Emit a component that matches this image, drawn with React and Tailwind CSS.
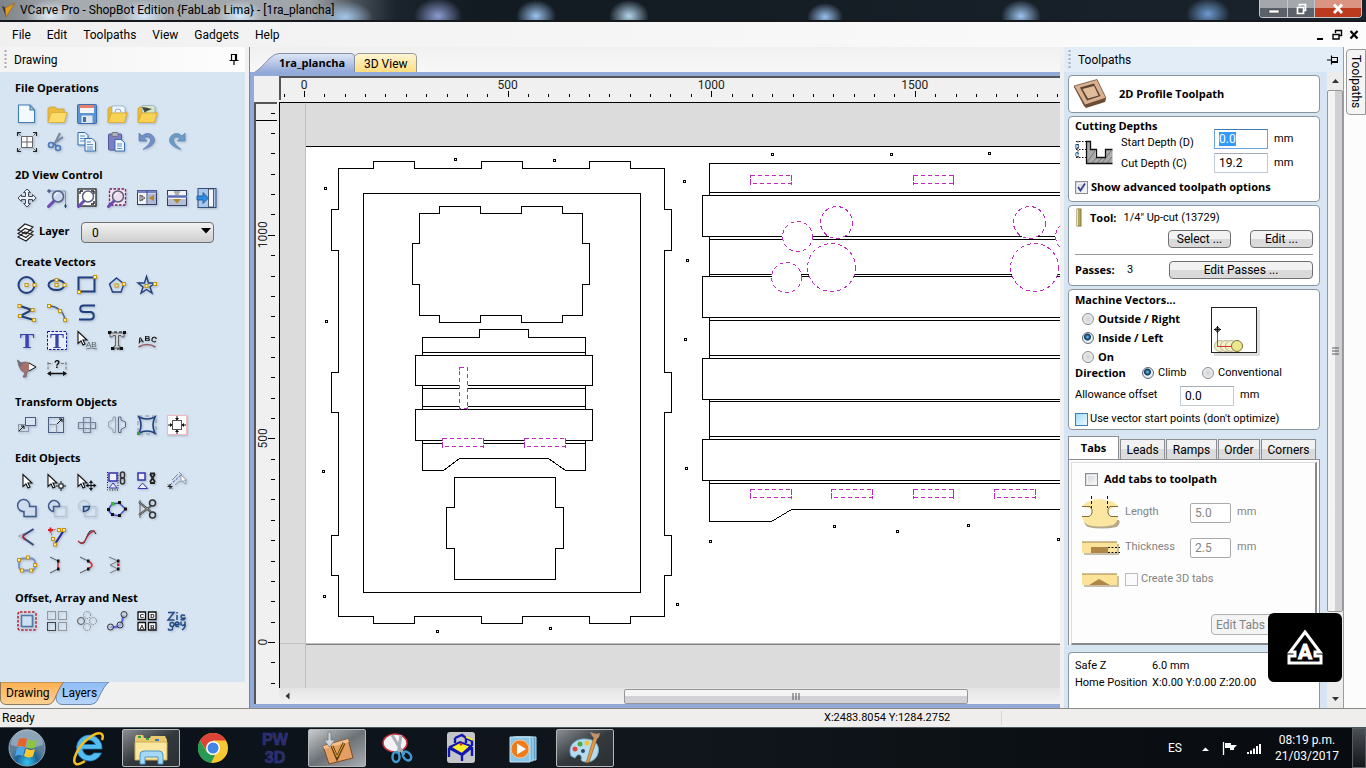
import React, { useState } from 'react';
import clsx from 'clsx';

const NAVY = '#1f3f7f';

const bold = "font-['Open_Sans','Noto_Sans',sans-serif] text-[11px] font-bold";

// small yellow node handle
const Node = ({ x, y }) => <rect x={x - 1.5} y={y - 1.5} width="3" height="3" fill="#fff3b0" stroke="#c8920a" />;

const Cursor = ({ x = 0, y = 0 }) => (
  <path transform={`translate(${x} ${y})`} d="M1 0.5V12.5L4 9.8L6 14L8 13L6 9H10Z" fill="#fff" stroke="#111" strokeWidth="1.1" />
);

const Folder = () => (
  <>
    <path d="M1 18V4.5L3 3H8L10 5H17V9" fill="#e9bd3f" stroke="#d2a12c" strokeWidth="0.8" />
    <path d="M1 18.5L4.5 8.5H20L17.5 18.5Z" fill="#fbdb6a" stroke="#dba92e" strokeWidth="0.8" />
  </>
);

const Magnifier = ({ bg }) => (
  <>
    <path d="M7 13L1.5 18.5" stroke="#6a49b8" strokeWidth="3" strokeLinecap="round" />
    <circle cx="11" cy="8.5" r="5.5" fill={bg || '#c9d8ee'} stroke="#59617c" strokeWidth="1.5" />
    <path d="M8 8A3 3 0 0 1 11 5" stroke="#fff" strokeWidth="1.2" fill="none" />
  </>
);

const icons = {
  new: <path d="M1.5 1H13L17.5 6V18.5H1.5ZM13 1V6H17.5" fill="#f3f9ff" stroke="#3f7fb5" strokeWidth="1.1" />,
  open: <Folder />,
  save: (
    <>
      <rect x="0.5" y="0.5" width="19" height="19" rx="1" fill="#5e93d2" stroke="#3b6cab" />
      <rect x="3" y="1" width="14" height="8" fill="#f4f5f8" />
      <rect x="3" y="1" width="14" height="3" fill="#e88070" />
      <rect x="4.5" y="11.5" width="11" height="7.5" fill="#e1e7f0" />
      <rect x="6" y="13" width="3" height="5" fill="#426fae" />
    </>
  ),
  import: (
    <>
      <Folder />
      <path d="M5 9V2H16L18 4V9Z" fill="#f2f7fc" stroke="#8ba9c6" strokeWidth="0.7" />
      <path d="M8 8A3 3 0 0 1 14 8" fill="none" stroke="#8ba9c6" />
      <path d="M1 18.5L4.5 9H20L17.5 18.5Z" fill="#f8d255" stroke="#dba92e" strokeWidth="0.8" />
    </>
  ),
  importImage: (
    <>
      <Folder />
      <path d="M5 9V1.5H16L18 3V9Z" fill="#d5e8c0" stroke="#8ba9c6" strokeWidth="0.7" />
      <path d="M5 3L9 3.5L15 5L9 7.5L8 9Z" fill="#444" />
      <path d="M1 18.5L4.5 9H20L17.5 18.5Z" fill="#f8d255" stroke="#dba92e" strokeWidth="0.8" />
    </>
  ),
  jobSetup: (
    <>
      <path d="M4.5 4.5H15.5V15.5H4.5ZM10 4V16M4 10H16" fill="#fff" stroke="#666" />
      <path d="M0.5 4V0.5H4M16 0.5H19.500V4M19.500 16V19.500H16M4 19.500H0.500V16" fill="none" stroke="#222" strokeWidth="1.1" />
      <path d="M1 1L3.500 3.500M19 1L16.500 3.500M19 19L16.500 16.500M1 19L3.500 16.500" stroke="#444" strokeWidth="0.8" />
    </>
  ),
  cut: (
    <>
      <path d="M13 1L7 13M16 5L6 12" stroke="#78889c" strokeWidth="2" />
      <circle cx="4" cy="13" r="2.5" fill="none" stroke="#4d79b5" strokeWidth="1.6" />
      <circle cx="11" cy="16" r="2.5" fill="none" stroke="#4d79b5" strokeWidth="1.6" />
      <path d="M7 12L10 14" stroke="#4d79b5" strokeWidth="1.6" />
    </>
  ),
  copy: (
    <>
      <path d="M1 0.5H8L11 3.5V13H1Z" fill="#eef5fd" stroke="#2f6cb0" />
      <path d="M3 4H8M3 6.500H9M3 9H9" stroke="#5b90c8" />
      <path d="M8 6.500H15L18.500 10V19H8Z" fill="#eef5fd" stroke="#2f6cb0" />
      <path d="M10 10H14M10 12.500H16M10 15H16M10 17H16" stroke="#5b90c8" />
    </>
  ),
  paste: (
    <>
      <rect x="1.500" y="2" width="13" height="16" rx="1" fill="#7e7fc3" stroke="#5556a0" />
      <rect x="5" y="0.500" width="6" height="4" rx="1" fill="#b0b3ba" stroke="#72757d" />
      <path d="M8 7.500H14L17.500 10.500V19H8Z" fill="#f3f8ff" stroke="#2f6cb0" />
      <path d="M10 12H15M10 14H15M10 16.500H15" stroke="#5b90c8" />
    </>
  ),
  undo: <path d="M2 1V9H10L7 6.500C11 3 15 6 13 10C12 12.500 10 14 6 17.500C14 15 19 11 17 6C15 1 9 0 5 4Z" fill="#7191c3" stroke="#5878ae" strokeWidth="0.7" />,
  redo: <path d="M18 1V9H10L13 6.500C9 3 5 6 7 10C8 12.500 10 14 14 17.500C6 15 1 11 3 6C5 1 11 0 15 4Z" fill="#6c9cc6" stroke="#5a88b3" strokeWidth="0.7" />,
  pan: <path d="M10 1L13.500 4.500H11.500V8.500H15.500V6.500L19 10L15.500 13.500V11.500H11.500V15.500H13.500L10 19L6.500 15.500H8.500V11.500H4.500V13.500L1 10L4.500 6.500V8.500H8.500V4.500H6.500Z" fill="#eef2f8" stroke="#444c5c" />,
  zoomBox: (
    <>
      <path d="M2 3H18.500V18" fill="none" stroke="#6a85b5" strokeWidth="0.8" />
      <path d="M0 3H4M2 1V5M17 18H20M18.500 16V20" stroke="#28406e" />
      <Magnifier />
    </>
  ),
  zoomAll: (
    <>
      <rect x="1" y="1" width="18" height="17" fill="#fff" stroke="#222" strokeWidth="1.300" />
      <path d="M3 3H6M3 3V6M17 3H14M17 3V6M17 16H14M17 16V13" stroke="#222" strokeWidth="1.400" />
      <Magnifier bg="#fff" />
    </>
  ),
  zoomSelected: (
    <>
      <rect x="2.500" y="1" width="16" height="16" fill="#f6e3ee" stroke="#7b1d68" strokeWidth="1.300" strokeDasharray="2.500 1.500" />
      <Magnifier bg="#eddcec" />
    </>
  ),
  splitV: (
    <>
      <rect x="0.500" y="2.500" width="19" height="14" fill="#f1f3f7" stroke="#333d66" />
      <rect x="0.500" y="2.500" width="19" height="2.500" fill="#7584c8" />
      <path d="M10 3V17" stroke="#333d66" />
      <path d="M3 7L8 10L3 13ZM5 7V13" fill="none" stroke="#555" />
      <rect x="11" y="5.500" width="8" height="10.500" fill="#aeb8d2" />
      <path d="M17 7V13L11.500 10Z" fill="#b28a2c" />
    </>
  ),
  splitH: (
    <>
      <rect x="0.500" y="2.500" width="19" height="15" fill="#f1f3f7" stroke="#333d66" />
      <path d="M0 8.500H20" stroke="#5c6cb6" strokeWidth="2.500" />
      <path d="M7 4H13M8 6H12" stroke="#666" />
      <rect x="1" y="11" width="18" height="6" fill="#b6bed4" />
      <path d="M6 11H14L10 15.500Z" fill="#b28a2c" />
    </>
  ),
  dockRight: (
    <>
      <rect x="1" y="0.500" width="18" height="19" fill="#a9c7e8" stroke="#33507e" />
      <rect x="11.500" y="1" width="5" height="18" fill="#f2f6fb" stroke="#345" strokeWidth="0.800" />
      <path d="M0 8H6V4.500L11.500 10L6 15.500V12H0Z" fill="#2f8be0" stroke="#15569c" strokeWidth="0.800" />
    </>
  ),
  circle: (
    <>
      <circle cx="9.500" cy="10" r="8" fill="none" stroke={NAVY} strokeWidth="2" />
      <Node x={9.500} y={10} /><Node x={17.500} y={10} />
    </>
  ),
  ellipse: (
    <>
      <ellipse cx="9.500" cy="10" rx="8" ry="5" fill="none" stroke={NAVY} strokeWidth="2" />
      <Node x={9.500} y={10} /><Node x={9.500} y={5} /><Node x={17.500} y={10} />
    </>
  ),
  rectangle: (
    <>
      <rect x="1.500" y="2.500" width="16" height="14" fill="none" stroke={NAVY} strokeWidth="2" />
      <Node x={18} y={2} /><Node x={2} y={17} />
    </>
  ),
  polygon: (
    <>
      <path d="M9.500 3L17 9L14 17H5.500L2.500 9Z" fill="none" stroke={NAVY} strokeWidth="1.400" />
      <Node x={9.500} y={10.500} /><Node x={17} y={9} />
    </>
  ),
  star: (
    <>
      <path d="M9.500 1.500L11.500 8H18L13 12L15 18L9.500 14.500L4 18L6 12L1 8H7.500Z" fill="none" stroke={NAVY} strokeWidth="1.400" />
      <Node x={9.500} y={11} /><Node x={18} y={9} />
    </>
  ),
  polyline: (
    <>
      <path d="M3 3L15 7L3 13L17 17" fill="none" stroke={NAVY} strokeWidth="2" />
      <Node x={2.500} y={3} /><Node x={15.500} y={7} /><Node x={3} y={13} /><Node x={17} y={17} />
    </>
  ),
  arc: (
    <>
      <path d="M2 3C10 3 17 9 18 17" fill="none" stroke="#4b5f7f" strokeWidth="1.400" />
      <Node x={2} y={3} /><Node x={13} y={8} /><Node x={18} y={17} />
    </>
  ),
  curve: <path d="M18 2.500H7C2 2.500 2 9 7 9H13C18 9 18 16.500 13 16.500H2" fill="none" stroke={NAVY} strokeWidth="2" />,
  text: <text x="10" y="17" textAnchor="middle" fill="#3a42ad" fontFamily="Liberation Serif, serif" fontWeight="bold" fontSize="22">T</text>,
  textBox: (
    <>
      <rect x="0.500" y="0.500" width="19" height="18" fill="#e9effa" stroke="#15159a" strokeDasharray="2.500 1.500" />
      <text x="10" y="16.500" textAnchor="middle" fill="#3a42ad" fontFamily="Liberation Serif, serif" fontWeight="bold" fontSize="21">T</text>
    </>
  ),
  textSelect: (
    <>
      <Cursor />
      <text x="9" y="16" fill="#566" fontFamily="Liberation Sans, sans-serif" fontSize="8">AB</text>
      <path d="M9 18Q14 16 20 18" fill="none" stroke="#778" />
    </>
  ),
  textTransform: (
    <>
      <path d="M3 2H17V6H15L14 4.500H11.500V15H13V17H7V15H8.500V4.500H6L5 6H3Z" fill="#cfd3d8" stroke="#555" strokeWidth="0.900" />
      <path d="M2 1H18M5 18H15" stroke="#111" strokeWidth="1" strokeDasharray="3 2" />
      <path d="M1 0H4V3H1ZM16 0H19V3H16ZM4 16H7V19H4ZM13 16H16V19H13Z" fill="#111" />
    </>
  ),
  textCurve: (
    <>
      <g fill="#111" fontFamily="Liberation Sans, sans-serif" fontWeight="bold" fontSize="8">
        <text x="1" y="12" transform="rotate(-14 3 10)">A</text>
        <text x="7.500" y="9.500">B</text>
        <text x="14" y="11" transform="rotate(14 16 9)">C</text>
      </g>
      <path d="M1.500 16Q10 11 18.500 16" fill="none" stroke="#9a5a62" strokeWidth="1.500" />
    </>
  ),
  trace: (
    <>
      <path d="M0.500 1L4 4L8 3L12 4L14 6L13 11L10 13L9 18H6L8 14L4 11L2 7Z" fill="#a9706c" stroke="#6d6468" strokeWidth="0.800" />
      <path d="M0.500 1L4 4L7 3L4 8L2 6Z" fill="#6d7078" />
      <path d="M12 4L19 8L12 12" fill="#f4f6fa" stroke="#111" />
    </>
  ),
  dimension: (
    <>
      <path d="M1 3V11M19 3V11M1 4.500H6M14 4.500H19" stroke="#777" strokeDasharray="3 1.500" />
      <text x="7" y="9" fontFamily="Liberation Sans, sans-serif" fontWeight="bold" fontSize="10">?</text>
      <path d="M1 14.500H19" stroke="#111" strokeWidth="1.500" />
      <path d="M0 14.500L4 12V17ZM20 14.500L16 12V17Z" fill="#111" />
    </>
  ),
  move: (
    <>
      <rect x="1.500" y="9.500" width="10" height="7" fill="none" stroke="#8b96ab" />
      <rect x="8.500" y="2.500" width="10" height="8" fill="#d9e4f2" stroke="#4b5d80" />
      <path d="M2 16L7 11M7 11H4M7 11V14" stroke="#111" fill="none" />
    </>
  ),
  scale: (
    <>
      <rect x="1.500" y="2.500" width="15" height="15" fill="none" stroke="#4b5d80" />
      <path d="M1.500 9.500H9.500V17.500" fill="none" stroke="#8b96ab" />
      <path d="M10 9L15 4M15 4H12M15 4V7" stroke="#111" fill="none" />
    </>
  ),
  align: <path d="M6.500 2.500H13.500V17.500H6.500ZM1.500 7.500H18.500V13.500H1.500Z" fill="none" stroke="#75839b" strokeWidth="1.200" />,
  mirror: (
    <>
      <path d="M8.500 2V17.500H6V14.500L1.500 12V7L6 5V2Z" fill="none" stroke="#9aa3b3" />
      <path d="M11.500 2V17.500H14V14.500L18.500 12V7L14 5V2Z" fill="none" stroke="#5b6880" />
    </>
  ),
  distort: (
    <>
      <rect x="1" y="1" width="18" height="18" fill="none" stroke="#8d98aa" strokeDasharray="4 3" />
      <path d="M2 2Q10 6 18 2Q14 10 18 18Q10 14 2 18Q6 10 2 2Z" fill="none" stroke={NAVY} strokeWidth="1.600" />
      <rect x="0" y="17" width="3" height="3" fill="#3b9a3b" />
    </>
  ),
  center: (
    <>
      <rect x="0.500" y="0.500" width="19" height="19" fill="#fff" stroke="#f0b9bb" />
      <rect x="5.500" y="5.500" width="9" height="9" fill="none" stroke="#555" />
      <path d="M10 1V5M10 15V19M1 10H5M15 10H19" stroke="#111" />
      <path d="M8 3H12L10 5.500ZM8 17H12L10 14.500ZM3 8V12L5.500 10ZM17 8V12L14.500 10Z" fill="#111" />
    </>
  ),
  select: <Cursor x={5} y={3} />,
  nodeEdit: (
    <>
      <Cursor y={3} />
      <path d="M14 10V20M9 15H19" stroke="#111" />
      <rect x="12" y="13" width="4" height="4" fill="#fff" stroke="#111" />
    </>
  ),
  transformSelect: (
    <>
      <Cursor y={3} />
      <path d="M14 9L16 12H12ZM14 20L16 17H12ZM8.500 14.500L11.500 12.500V16.500ZM19.500 14.500L16.500 12.500V16.500Z" fill="#111" />
      <path d="M14 11V18M11 14.500H17" stroke="#111" />
    </>
  ),
  group: (
    <>
      <path d="M0.500 1V19H11V1" fill="none" stroke="#111" strokeDasharray="1 1.500" />
      <rect x="2" y="2" width="8" height="8" fill="#eef" stroke="#3434b0" strokeWidth="1.500" />
      <path d="M6 12L10 17H2Z" fill="#eef" stroke="#3434b0" />
      <rect x="13.500" y="1" width="4" height="6" rx="2" fill="none" stroke="#333" strokeWidth="1.500" />
      <rect x="13.500" y="7" width="4" height="6" rx="2" fill="none" stroke="#333" strokeWidth="1.500" />
    </>
  ),
  ungroup: (
    <>
      <rect x="1" y="2" width="7" height="7" fill="#eef" stroke="#3434b0" strokeWidth="1.500" />
      <path d="M5.500 12L10.500 17.500H1Z" fill="#eef" stroke="#3434b0" />
      <path d="M13 3L18 11M18 3L13 11M13 2.500H18M13 12H18" stroke="#222" strokeWidth="1.800" />
    </>
  ),
  measure: (
    <>
      <path d="M3 14L15 3" stroke="#4a50c8" strokeDasharray="2.500 1.500" />
      <path d="M3 13V18M0.500 15.500H5.500M1 13.500L5 17.500" stroke="#222" />
      <path d="M5 9L11 3M12 1L15 4M8 14L13 10" fill="none" stroke="#8a93a3" />
      <path d="M14 4V11L16 9.500L18 13L19 12L17.500 9H19.500Z" fill="#fff" stroke="#8a93a3" strokeWidth="0.800" />
    </>
  ),
  weld: <path d="M7 12.500A6 6 0 1 1 12.500 7.500H19V17.500H7Z" fill="#cfdcee" stroke="#3e5b8c" strokeWidth="1.500" />,
  subtract: (
    <>
      <rect x="7.500" y="7.500" width="11.500" height="10" fill="none" stroke="#b5c2d6" />
      <path d="M6.500 12.500A5.500 5.500 0 1 1 12.500 7.500H6.500Z" fill="#cfdcee" stroke="#3e5b8c" strokeWidth="1.500" />
    </>
  ),
  intersect: (
    <>
      <circle cx="7" cy="7" r="5.500" fill="none" stroke="#b5c2d6" />
      <rect x="7.500" y="7.500" width="11.500" height="10" fill="none" stroke="#b5c2d6" />
      <path d="M6.500 7.500H12.500Q12 12 6.500 12.500Z" fill="#a9bbd6" stroke="#27467c" strokeWidth="1.500" />
    </>
  ),
  join: (
    <>
      <path d="M5 5L12 4L18.500 10L12 17L5 15.500L1 11Z" fill="none" stroke="#4a50c8" strokeWidth="1.500" />
      <path d="M11 2H14V5H11ZM17 8.500H20V11.500H17ZM11 15H14V18H11ZM4 14H7V17H4ZM0 9H3V12H0Z" fill="#111" />
      <rect x="4" y="3" width="3.500" height="3.500" fill="#2fbf2f" />
    </>
  ),
  scissors: (
    <>
      <path d="M3 1V19" stroke="#666" />
      <path d="M2 3L14 13M2 16L14 7" stroke="#333" strokeWidth="2" />
      <path d="M2 3L14 13M2 16L14 7" stroke="#ddd" strokeWidth="0.600" />
      <circle cx="15.500" cy="4" r="3" fill="none" stroke="#333" strokeWidth="1.500" />
      <circle cx="15.500" cy="16" r="3" fill="none" stroke="#333" strokeWidth="1.500" />
    </>
  ),
  fillet: (
    <>
      <path d="M16 3L1.500 9L16 17" fill="none" stroke="#9ba4b5" />
      <path d="M16.500 2L7 8Q5 10 8 12L16.500 18" fill="none" stroke="#2d4373" strokeWidth="1.600" />
      <path d="M7.500 7Q4.500 10 8 12.500" fill="none" stroke="#c01f2f" strokeWidth="1.600" />
    </>
  ),
  extend: (
    <>
      <path d="M3 3L14 2M3 3L6 12" stroke="#d46" strokeDasharray="2 1.500" />
      <path d="M8 17L17 3" stroke="#28289a" strokeWidth="2.200" />
      <path d="M1 3H6M3.500 0.500V5.500" stroke="#d22" strokeWidth="1.800" />
      <Node x={17} y={3} /><Node x={12} y={3} /><Node x={6} y={12} /><Node x={8} y={17.500} />
    </>
  ),
  smooth: (
    <>
      <path d="M1 14L3 16L7 16L11 7L13 4L17 4L19 7" fill="none" stroke="#111" />
      <path d="M1 14Q6 19 9 12T18 4" fill="none" stroke="#b3303c" strokeWidth="1.300" />
    </>
  ),
  fitCurve: (
    <>
      <rect x="2" y="3.500" width="16" height="12" rx="4" fill="none" stroke="#7791bd" strokeWidth="1.800" />
      <Node x={2} y={5} /><Node x={11} y={2.500} /><Node x={18} y={10} /><Node x={14} y={15.500} /><Node x={5} y={15.500} />
    </>
  ),
  closeLine: (
    <>
      <path d="M3 2L11 6M11 14L3 18" stroke="#555" />
      <path d="M11 6V14" stroke="#d33" strokeWidth="1.500" />
      <path d="M10 4.500H12.500V7.500H10ZM10 12.500H12.500V15.500H10Z" fill="#111" />
    </>
  ),
  closeCurve: (
    <>
      <path d="M3 2L11 6M11 14L3 18" stroke="#555" />
      <path d="M11 6Q19 10 11 14" fill="none" stroke="#d33" strokeWidth="1.500" />
      <path d="M10 4.500H12.500V7.500H10ZM10 12.500H12.500V15.500H10Z" fill="#111" />
    </>
  ),
  closeMove: (
    <>
      <path d="M2 2L11 6L3 10L11 14L3 18" fill="none" stroke="#777" />
      <path d="M10 4.500H12.500V7.500H10ZM10 12.500H12.500V15.500H10Z" fill="#111" />
      <rect x="10" y="8.500" width="2.500" height="2.500" fill="#d22" />
    </>
  ),
  offset: (
    <>
      <rect x="1" y="1" width="18" height="18" rx="2" fill="none" stroke="#b81f2b" strokeWidth="1.500" strokeDasharray="2.500 1.500" />
      <rect x="4.500" y="4.500" width="11" height="11" fill="#cfe0f3" stroke="#5577a8" strokeWidth="1.600" />
    </>
  ),
  blockArray: (
    <>
      <path d="M0.500 0.500H8.500V8.500H0.500ZM11.500 0.500H19.500V8.500H11.500ZM11.500 11.500H19.500V19.500H11.500Z" fill="none" stroke="#555" strokeDasharray="1 1" />
      <rect x="0.500" y="11.500" width="8" height="8" fill="none" stroke="#444" />
    </>
  ),
  circleArray: (
    <>
      <circle cx="4" cy="10" r="3.500" fill="none" stroke="#555" />
      <circle cx="10" cy="4" r="3.500" fill="none" stroke="#777" strokeDasharray="1.200 1" />
      <circle cx="16" cy="10" r="3.500" fill="none" stroke="#777" strokeDasharray="1.200 1" />
      <circle cx="10" cy="16" r="3.500" fill="none" stroke="#777" strokeDasharray="1.200 1" />
    </>
  ),
  pathArray: (
    <>
      <path d="M3 16Q16 18 16 4" fill="none" stroke="#5a60d8" strokeWidth="2" />
      <g fill="#cdd6ea" fillOpacity="0.600" stroke="#333"><circle cx="3.500" cy="16" r="3" /><circle cx="13" cy="14" r="3" /><circle cx="17" cy="3.500" r="3" /></g>
    </>
  ),
  nest: (
    <>
      <path d="M1 1H8.500V8.500H1ZM11.500 1H19V8.500H11.500ZM1 11.500H8.500V19H1ZM11.500 11.500H19V19H11.500Z" fill="#fff" stroke="#111" strokeWidth="1.300" />
      <g fontFamily="Liberation Sans, sans-serif" fontWeight="bold" fontSize="6" textAnchor="middle">
        <text x="4.800" y="7">C</text><text x="15.300" y="7">D</text><text x="4.800" y="17.500">A</text><text x="15.300" y="17.500">B</text>
      </g>
    </>
  ),
  plate: (
    <g fill="none" stroke="#234a86" strokeWidth="1.500">
      <path d="M1 1.500H7L1 9H7.500M10 4V9M10 1V2.500M18 4.500Q14 3 14 5.500T18 7Q18 9.500 13.500 8.500" />
      <path d="M5 11.500A2 2 0 1 0 5 15.500A2 2 0 1 0 5 11.500M5 15.500Q7 19.500 3 19Q1 19 1.500 17.500M8.500 13.500H12Q12 11 10 11Q8 11 8.500 14Q9 16 12 15.500M14 10.500V13.500Q16 15.500 18 13V10.500M18 13Q19 16 15 19" />
    </g>
  ),
};

const toolSections = [
  { title: 'File Operations', rows: [['new', 'open', 'save', 'import', 'importImage'], ['jobSetup', 'cut', 'copy', 'paste', 'undo', 'redo']] },
  { title: '2D View Control', rows: [['pan', 'zoomBox', 'zoomAll', 'zoomSelected', 'splitV', 'splitH', 'dockRight']], layer: true },
  { title: 'Create Vectors', rows: [['circle', 'ellipse', 'rectangle', 'polygon', 'star'], ['polyline', 'arc', 'curve'], ['text', 'textBox', 'textSelect', 'textTransform', 'textCurve'], ['trace', 'dimension']] },
  { title: 'Transform Objects', rows: [['move', 'scale', 'align', 'mirror', 'distort', 'center']] },
  { title: 'Edit Objects', rows: [['select', 'nodeEdit', 'transformSelect', 'group', 'ungroup', 'measure'], ['weld', 'subtract', 'intersect', 'join', 'scissors'], ['fillet', 'extend', 'smooth'], ['fitCurve', 'closeLine', 'closeCurve', 'closeMove']] },
  { title: 'Offset, Array and Nest', rows: [['offset', 'blockArray', 'circleArray', 'pathArray', 'nest', 'plate']] },
];

const PushPin = ({ className }) => (
  <svg width="10" height="12" viewBox="0 0 10 12" className={className}>
    <path d="M2.500 0.500H7.500V6.500H2.500ZM6.500 0.500V6.500M0.500 6.500H9.500M5 7V11" fill="none" stroke="#000" strokeWidth="1.200" />
  </svg>
);

const Grip = () => (
  <svg width="4" height="20" viewBox="0 0 4 20">
    <path d="M1.500 0V20" stroke="#a9aeb4" strokeWidth="2" strokeDasharray="2 2" />
  </svg>
);

const TitleBar = () => (
  <header className="h-[22px] shrink-0 flex items-start justify-between border-b-2 border-[#15181c] bg-[radial-gradient(ellipse_24px_18px_at_438px_16px,#8c9bd0,transparent),radial-gradient(ellipse_20px_16px_at_536px_16px,#9cc4ee,transparent),radial-gradient(ellipse_20px_16px_at_629px_16px,#b4d4ea,transparent),radial-gradient(ellipse_18px_14px_at_825px_17px,#98c0ea,transparent),radial-gradient(ellipse_20px_16px_at_1021px_16px,#9cc4ee,transparent),radial-gradient(ellipse_22px_16px_at_1208px_14px,#6f9bd0,transparent),radial-gradient(ellipse_24px_16px_at_50px_16px,#dfeaf4,transparent),radial-gradient(ellipse_24px_16px_at_144px_16px,#d4e6f8,transparent),radial-gradient(ellipse_24px_16px_at_240px_16px,#d4e6f8,transparent),radial-gradient(ellipse_28px_16px_at_345px_17px,#a4c6ea,transparent),linear-gradient(90deg,#7c8389,#a7acb1_60px,#a0a5aa_310px,#4a525a_355px,#1b232c_395px,#121a22_480px,#1a222b)]">
    <div className="flex items-center h-5 pl-0.5 gap-1">
      <svg width="14" height="16" viewBox="0 0 14 16">
        <path d="M0 4L4 6L4 15Z" fill="#333" />
        <path d="M3 6L13 1L4 15Z" fill="#e39a22" stroke="#9b6311" strokeWidth="0.700" />
      </svg>
      <h1 className="text-xs leading-5 text-black">VCarve Pro - ShopBot Edition {'{FabLab Lima}'} - [1ra_plancha]</h1>
    </div>
    <div className="flex mr-1 h-[18px] rounded-b border border-t-0 border-[#c4c8cc] overflow-hidden">
      <button aria-label="Minimize" className="w-7 flex items-center justify-center border-r border-[#c4c8cc] bg-linear-to-b from-[#a4a8ad] from-50% to-[#5b6168] to-50%">
        <svg width="12" height="12"><rect x="1" y="7" width="10" height="3" fill="#fff" stroke="#444" strokeWidth="0.600" /></svg>
      </button>
      <button aria-label="Restore" className="w-[27px] flex items-center justify-center border-r border-[#c4c8cc] bg-linear-to-b from-[#a4a8ad] from-50% to-[#5b6168] to-50%">
        <svg width="12" height="12"><path d="M4.500 3V1.500H10.500V7.500H9M2.500 4.500H8.500V10.500H2.500Z" fill="none" stroke="#fff" strokeWidth="1.700" /></svg>
      </button>
      <button aria-label="Close" className="w-[46px] flex items-center justify-center bg-linear-to-b from-[#dc9482] from-50% to-[#bc3a1e] to-50%">
        <svg width="12" height="12"><path d="M2 1.500L10 10M10 1.500L2 10" stroke="#fff" strokeWidth="2.800" /></svg>
      </button>
    </div>
  </header>
);

const MenuBar = () => (
  <nav className="h-[25px] shrink-0 flex items-center justify-between bg-linear-to-r from-[#f0f0f0] to-[#fcfcfc] pl-1 pr-1.5">
    <div className="flex">
      {['File', 'Edit', 'Toolpaths', 'View', 'Gadgets', 'Help'].map((item) => (
        <button key={item} className="px-2 text-xs leading-5">{item}</button>
      ))}
    </div>
    <div className="flex gap-1.5">
      <button aria-label="Minimize document"><svg width="11" height="12"><path d="M2 10H8" stroke="#000" strokeWidth="2" /></svg></button>
      <button aria-label="Restore document"><svg width="11" height="12"><path d="M3.500 4V1.500H9.500V6.500H7M1 5.500H7V10H1Z" fill="none" stroke="#000" strokeWidth="1.400" /></svg></button>
      <button aria-label="Close document"><svg width="11" height="12"><path d="M1.500 2L8.500 9.500M8.500 2L1.500 9.500" stroke="#000" strokeWidth="2.200" /></svg></button>
    </div>
  </nav>
);

const DrawingPanel = () => (
  <aside className="w-[245px] shrink-0 flex flex-col bg-[#f0f0f0] mr-1">
    <div className="h-[25px] flex items-center gap-1.5 pl-1 pr-1.5 bg-linear-to-r from-[#f3f3f3] to-[#fdfdfd]">
      <Grip />
      <h2 className="flex-1 text-xs">Drawing</h2>
      <button aria-label="Pin drawing panel"><PushPin /></button>
    </div>
    <div className="flex-1 min-h-0 overflow-hidden flex flex-col gap-2.5 pt-[7px] bg-[#d7e4f1]">
      {toolSections.map((section) => (
        <section key={section.title} className="first:flex first:flex-col first:gap-[3px]">
          <h3 className={clsx('pl-[15px] leading-[18px]', bold)}>{section.title}</h3>
          <div>
            {section.rows.map((row) => (
              <div key={row[0]} className="flex pl-3">
                {row.map((name) => (
                  <button key={name} aria-label={name} className="w-[30px] h-7 flex items-center justify-center">
                    <svg width="20" height="20" viewBox="0 0 20 20" className="overflow-visible drop-shadow-[1px_1px_1px_rgba(80,100,130,0.35)]">{icons[name]}</svg>
                  </button>
                ))}
              </div>
            ))}
          </div>
          {section.layer && (
            <div className="flex items-center h-[31px] pt-2 pl-[17px]">
              <svg width="18" height="20" viewBox="0 0 18 20">
                <path d="M1 15L9 19L16 13L8 10ZM1 11.500L9 15.500L16 9.500L8 6.500ZM1 8L9 12L16 5L8 2Z" fill="#fff" stroke="#222" strokeWidth="1.200" />
              </svg>
              <label htmlFor="layer" className={clsx('pl-1 w-[46px]', bold)}>Layer</label>
              <div className="relative w-[133px]">
                <select id="layer" defaultValue="0" className="appearance-none w-full h-[21px] pl-2.5 text-xs rounded-sm border border-[#707070] bg-linear-to-b from-[#f2f2f2] to-[#cfcfcf]">
                  <option>0</option>
                </select>
                <svg width="10" height="6" className="absolute right-[3px] top-2 pointer-events-none"><path d="M0 0H10L5 5.500Z" /></svg>
              </div>
            </div>
          )}
        </section>
      ))}
    </div>
    <div className="relative h-[26px] flex items-start" role="tablist">
      <svg width="112" height="23" className="absolute left-0 top-0">
        <defs>
          <linearGradient id="tabOrange" x2="0" y2="1"><stop offset="0" stopColor="#fdb050" /><stop offset="1" stopColor="#fdd194" /></linearGradient>
          <linearGradient id="tabBlue" x2="0" y2="1"><stop offset="0" stopColor="#8dbcf5" /><stop offset="1" stopColor="#b6d5fb" /></linearGradient>
        </defs>
        <path d="M56 0H109Q105 2 98 17Q96 22 90 22.500H62Q56 22 56 15Z" fill="url(#tabBlue)" stroke="#6d87ad" />
        <path d="M0.500 0H64Q61 2 55 16Q53 22 48 22.500H6Q0.500 22 0.500 17Z" fill="url(#tabOrange)" stroke="#8f7a5a" />
      </svg>
      <button role="tab" aria-selected="true" className="relative pl-1.5 w-[62px] text-left text-xs leading-[22px]">Drawing</button>
      <button role="tab" aria-selected="false" className="relative text-xs leading-[22px]">Layers</button>
    </div>
  </aside>
);

const TICK = 20.36;
const rulerTicks = Array.from({ length: 40 }, (_, i) => i - 1);

const HorizontalRuler = () => (
  <svg className="block w-full h-6 bg-[#f0f0f0] border-t-2 border-l-2 border-[#555]" shapeRendering="crispEdges">
    {rulerTicks.map((i) => {
      const x = Math.round(23 + i * TICK) + 0.5;
      return <path key={i} d={`M${x} 16V19`} stroke="#000" />;
    })}
    {[0, 10, 20, 30].map((i) => (
      <React.Fragment key={i}>
        <path d={`M${Math.round(23 + i * TICK) + 0.5} 13V19`} stroke="#000" />
        <text x={23 + i * TICK} y="11" textAnchor="middle" fontSize="12" fill="#222">{i * 50}</text>
      </React.Fragment>
    ))}
  </svg>
);

const VerticalRuler = () => (
  <svg className="block w-[23px] shrink-0 h-full bg-[#f0f0f0] border-t-2 border-l-2 border-[#555]" shapeRendering="crispEdges">
    <path d="M0 16.500H21" stroke="#000" />
    {rulerTicks.slice(0, 28).map((i) => (
      <path key={i} d={`M15 ${Math.round(538 - i * TICK) + 0.5}H19`} stroke="#000" />
    ))}
    <path d="M15 579.500H19" stroke="#000" />
    {[0, 10, 20].map((i) => {
      const y = 538 - i * TICK;
      return (
        <React.Fragment key={i}>
          <path d={`M12 ${Math.round(y) + 0.5}H19`} stroke="#000" />
          <text transform={`translate(11 ${y}) rotate(-90)`} textAnchor="middle" fontSize="12" fill="#222">{i * 50}</text>
        </React.Fragment>
      );
    })}
  </svg>
);

const holes = [
  [455, 159], [554, 160], [325, 188], [326, 321], [323, 471], [324, 596], [437, 631], [550, 628], [686, 468], [677, 604], [685, 339],
  [687, 260], [684, 181], [772, 154], [891, 154], [989, 153], [834, 526], [897, 531], [968, 525], [710, 541], [1058, 539],
];

const pockets = [
  [459, 367, 8, 41], [442, 438, 41, 8], [524, 438, 41, 8],
  [750, 175, 41, 8], [913, 175, 40, 8],
  [750, 489, 41, 8], [831, 489, 41, 8], [913, 489, 40, 8], [994, 489, 41, 8],
];

const discs = [[836, 222, 16], [797, 236, 15], [786, 277, 15], [831, 267, 24], [1029, 222, 16], [1034, 267, 24], [1070, 236, 15]];

const Canvas = () => (
  <svg className="block w-full flex-1 min-h-0 bg-[#dcdcdc] border-t border-l border-black">
    <g transform="translate(-280 -103)" shapeRendering="crispEdges" fill="none" stroke="#000">
      <path d="M306 146H4000V643H306Z" fill="#fff" stroke="none" />
      <path d="M305.500 104V4000M280 643.500H4000" stroke="#c0c0c0" />
      <path d="M306 644.500H4000" stroke="#808080" />
      <path d="M306 146.500H4000" />
      <g transform="translate(0.500 0.500)">
        <path d="M338 168H373V161H414V168H481V161H522V168H589V161H630V168H664V209H671V250H664V372H671V412H664V535H671V575H664V616H630V623H589V616H522V623H481V616H414V623H373V616H338V575H331V535H338V412H331V372H338V250H331V209H338Z" />
        <path d="M363 193H640V592H363Z" />
        <path d="M419 213H439V206H480V213H521V206H562V213H582V243H589V284H582V315H562V322H521V315H480V322H439V315H419V284H412V243H419Z" />
        <path d="M422 355V337H479V329H528V337H585V355M422 352H585M415 355H592V385H415ZM422 385V409M585 385V409M422 388H585M422 406H585M415 409H592V440H415ZM422 440V470H443L459 458H548L565 470H585V440M422 443H585" />
        <path d="M454 477H555V507H563V548H555V579H454V548H446V507H454Z" />
        <path d="M4000 163H709V192H4000M709 192V195M4000 195H702V236H4000M709 236V276M709 239H4000M709 274H4000M4000 276H702V317H4000M709 317V358M709 320H4000M709 355H4000M4000 358H702V399H4000M709 399V439M709 401H4000M709 436H4000M4000 439H702V480H4000M709 480V521H771L791 509H4000M709 483H4000" />
      </g>
      <g transform="translate(0.500 0.500)" stroke="#c028c0" strokeDasharray="4 3">
        {pockets.map(([x, y, w, h]) => (
          <React.Fragment key={`${x}-${y}`}>
            <rect x={x} y={y} width={w} height={h} fill="#fff" />
            <path d={`M${x} ${y + 2}V${y - 1}M${x + w} ${y + 2}V${y - 1}M${x} ${y + h - 2}V${y + h + 1}M${x + w} ${y + h - 2}V${y + h + 1}`} strokeDasharray="none" />
          </React.Fragment>
        ))}
        {discs.map(([x, y, r]) => <circle key={x} cx={x} cy={y} r={r} fill="#fff" />)}
      </g>
      {holes.map(([x, y]) => <rect key={`${x}-${y}`} x={x - 0.500} y={y - 0.500} width="2" height="2" />)}
    </g>
  </svg>
);

const Workspace = () => (
  <main className="flex-1 min-w-0 flex flex-col border-l border-[#848484] bg-linear-to-b from-[#f0f0f0] to-[#fafafa] to-5%">
    <div className="relative h-[25px] shrink-0 flex" role="tablist">
      <svg width="180" height="20" className="absolute left-0 bottom-0">
        <defs>
          <linearGradient id="docBlue" x2="0" y2="1"><stop offset="0" stopColor="#dfe8f8" /><stop offset="1" stopColor="#93a9d8" /></linearGradient>
          <linearGradient id="docGold" x2="0" y2="1"><stop offset="0" stopColor="#fff6d8" /><stop offset="1" stopColor="#ffdd7e" /></linearGradient>
        </defs>
        <path d="M104.500 20V4L108 1.500H163Q166.500 1.500 166.500 5V20" fill="url(#docGold)" stroke="#999" />
        <path d="M5 20Q10 17 20 6Q25 1.500 29 1.500H101Q104.500 1.500 104.500 5V20" fill="url(#docBlue)" stroke="#8791a5" />
      </svg>
      <button role="tab" aria-selected="true" className={clsx('relative w-[114px] pl-[29px] pt-2 text-left', bold)}>1ra_plancha</button>
      <button role="tab" aria-selected="false" className="relative pt-2 text-xs">3D View</button>
    </div>
    <div className="flex-1 min-h-0 flex flex-col border-4 border-r-0 border-[#93a9d8] bg-[#f0f0f0]">
      <div className="h-[26px] shrink-0 pl-[25px]"><HorizontalRuler /></div>
      <div className="flex-1 min-h-0 flex gap-0.5">
        <VerticalRuler />
        <div className="flex-1 min-w-0 flex flex-col">
          <Canvas />
          <div className="h-4 shrink-0 flex items-center bg-linear-to-b from-[#e4e4e4] to-[#f3f3f3]">
            <button aria-label="Scroll left" className="w-4 flex justify-center"><svg width="5" height="8"><path d="M4.500 0.500V7.500L0.500 4Z" fill="#333" /></svg></button>
            <div className="flex-1 flex h-[15px]">
              <div className="w-[43%]" />
              <div className="w-[45%] flex items-center justify-center rounded-xs border border-[#979797] bg-linear-to-b from-[#f4f4f4] from-50% to-[#d2d2d6] to-50%">
                <svg width="8" height="7"><path d="M1 0V7M4 0V7M7 0V7" stroke="#555" /></svg>
              </div>
            </div>
          </div>
        </div>
      </div>
    </div>
  </main>
);

const Card = ({ className, children }) => (
  <section className={clsx('rounded border border-[#8c959e] bg-white', className)}>{children}</section>
);

const Num = ({ id, value, className, ...rest }) => (
  <input id={id} defaultValue={value} className={clsx('h-5 px-1 text-xs leading-4 border bg-white', className || 'w-[54px] border-[#c3cbd4] border-t-[#a5adb8]')} {...rest} />
);

const PushButton = ({ className, children, ...rest }) => (
  <button className={clsx('text-xs leading-4 rounded-sm border border-[#707070] bg-linear-to-b from-[#f2f2f2] from-50% to-[#dadada] to-50% disabled:border-[#adb2b5] disabled:from-[#f4f4f4] disabled:to-[#f4f4f4] disabled:text-[#838383]', className)} {...rest}>
    {children}
  </button>
);

const Radio = ({ name, label, strong, ...rest }) => (
  <label className={clsx('flex items-center', strong && bold)}>
    <input type="radio" name={name} className="appearance-none size-3 shrink-0 rounded-full border border-[#8e8f8f] bg-[radial-gradient(circle,#d0d3d6,#f6f6f6)] checked:border-[#5e6a74] checked:bg-[radial-gradient(circle_at_45%_40%,#6fd0f5,#14456e_2.500px,#123a5c_3px,#e8eef2_4px)]" {...rest} />
    <span className="pl-1">{label}</span>
  </label>
);

const checkBase = 'appearance-none size-[13px] shrink-0 border border-[#8e8f8f] bg-[linear-gradient(135deg,#cfd3d8,#f8f8f8)] outline-1 -outline-offset-3 outline-[#f4f4f4]';

const ProfileForm = () => {
  const [advanced, setAdvanced] = useState(true);
  const [tab, setTab] = useState('Tabs');

  return (
    <div className="flex-1 min-w-0 min-h-0 overflow-hidden flex flex-col gap-[3px] pt-[3px] pl-1 pr-[7px] text-[11px]">
      <Card className="h-[38px] shrink-0 flex items-center gap-3 pl-1">
        <svg width="34" height="30" viewBox="0 0 34 30">
          <path d="M1 8L24 1L33 20L32 23L13 29L11 27Z" fill="#6b4c34" />
          <path d="M1 7L24 0.500L33 19L12 26Z" fill="#d9b190" stroke="#5c412c" strokeWidth="0.700" />
          <path d="M7 8.500L21 4.500L27.500 17L14 21.500Z" fill="#5a4330" />
          <path d="M9.500 10L21 7L25.500 16.500L15 19.500Z" fill="#e2bb9b" />
        </svg>
        <h3 className={bold}>2D Profile Toolpath</h3>
      </Card>

      <Card className="h-[86px] shrink-0 px-1.5">
        <div className="flex">
          <div className="w-[139px]">
            <h3 className={clsx('pt-0.5 h-[15px] leading-[14px] whitespace-nowrap', bold)}>Cutting Depths</h3>
            <div className="flex gap-2">
              <svg width="38" height="42" viewBox="0 0 38 42">
                <path d="M11.500 9H15.500V18H20.500V25.500H30.500V18H37.500V31.500H11.500Z" fill="#aaa" />
                <path d="M12 30L20 19M17 31L22 25M22 31L27 26M27 31L36 19M32 31L37 25" stroke="#777" />
                <path d="M37.500 17.500H30.500V25.500H21.500V17.500H15.500V9.500H11.500V31.500H37.500" fill="none" stroke="#111" strokeWidth="1.300" />
                <path d="M1 9.500H11M1 17.500H11M1 25.500H11M3 9V26" stroke="#111" strokeDasharray="1.500 1.500" />
                <text x="0" y="17" fontSize="7" className="font-mono">D</text>
                <text x="0" y="25" fontSize="7" className="font-mono">C</text>
              </svg>
              <div className="flex flex-col whitespace-nowrap">
                <label htmlFor="start" className="leading-[21px]">Start Depth (D)</label>
                <label htmlFor="cut" className="leading-[21px]">Cut Depth (C)</label>
              </div>
            </div>
          </div>
          <div className="flex flex-col gap-1 pt-3">
            <div className="flex items-center gap-1.5">
              <div className="relative">
                <Num id="start" value="" className="w-[54px] border-[#6ba3dc] border-t-[#3d7bad]" />
                <span className="absolute left-[5px] top-[3px] bg-[#3399ff] text-white text-xs leading-[14px]">0.0</span>
              </div>
              mm
            </div>
            <div className="flex items-center gap-1.5"><Num id="cut" value="19.2" />mm</div>
          </div>
        </div>
        <label className={clsx('flex items-center gap-[3px] h-[26px] whitespace-nowrap', bold)}>
          <span className="relative flex">
            <input type="checkbox" checked={advanced} onChange={(e) => setAdvanced(e.target.checked)} className={checkBase} />
            {advanced && <svg width="9" height="9" className="absolute left-0.5 top-0.5 pointer-events-none"><path d="M1 4L3.500 7.500L8 0.500" fill="none" stroke="#34428a" strokeWidth="1.800" /></svg>}
          </span>
          Show advanced toolpath options
        </label>
      </Card>

      <Card className="h-[81px] shrink-0 px-1.5">
        <div className="flex items-center h-6">
          <svg width="8" height="20"><rect x="2" y="1" width="4" height="17" fill="#b7a55b" stroke="#85763c" /><path d="M2.500 1V18" stroke="#eee3b0" /></svg>
          <span className={clsx('pl-[7px]', bold)}>Tool:</span>
          <span className="pl-[7px]">1/4" Up-cut (13729)</span>
        </div>
        <div className="flex justify-end gap-[19px]">
          <PushButton className="w-[63px] h-[18px]">Select ...</PushButton>
          <PushButton className="w-[63px] h-[18px]">Edit ...</PushButton>
        </div>
        <hr className="my-1.5 border-[#9a9a9a]" />
        <div className="flex items-center">
          <span className={clsx('w-[52px]', bold)}>Passes:</span>
          <span className="flex-1">3</span>
          <PushButton className="w-36 h-[18px]">Edit Passes ...</PushButton>
        </div>
      </Card>

      <Card className="h-[141px] shrink-0 px-1.5">
        <div className="flex">
          <fieldset className="w-[136px]">
            <legend className={clsx('h-[21px] leading-5', bold)}>Machine Vectors...</legend>
            <div className="flex flex-col gap-[3px] pl-[7px] leading-4">
              <Radio name="side" label="Outside / Right" strong />
              <Radio name="side" label="Inside / Left" strong defaultChecked />
              <Radio name="side" label="On" strong />
            </div>
          </fieldset>
          <svg width="50" height="52" viewBox="0 0 50 52" className="mt-4">
            <rect x="3" y="4" width="46" height="46" fill="#ddd" />
            <rect x="0.500" y="1.500" width="45" height="45" fill="#fff" stroke="#222" />
            <g fill="#f3f0cc" stroke="#b8b68a"><circle cx="9" cy="40" r="5.500" /><circle cx="15" cy="40" r="5.500" /><circle cx="20" cy="40" r="5.500" /></g>
            <circle cx="26" cy="40" r="5.500" fill="#ece68c" stroke="#77733a" />
            <path d="M6.500 27V40.500H20" fill="none" stroke="#e0302a" />
            <circle cx="6.500" cy="23.500" r="2" fill="none" stroke="#111" /><path d="M3 23.500H10M6.500 20V27" stroke="#111" />
          </svg>
        </div>
        <div className="flex items-center h-4 whitespace-nowrap">
          <span className={clsx('w-[67px]', bold)}>Direction</span>
          <span className="w-[60px]"><Radio name="dir" label="Climb" defaultChecked /></span>
          <Radio name="dir" label="Conventional" />
        </div>
        <div className="flex items-center gap-1.5 h-[29px]">
          <label htmlFor="allow" className="w-[99px]">Allowance offset</label>
          <Num id="allow" value="0.0" />
          mm
        </div>
        <label className="flex items-center gap-0.5 h-[18px] whitespace-nowrap">
          <input type="checkbox" className="appearance-none size-[13px] shrink-0 border border-[#3c7fb1] bg-linear-to-br from-[#9fdcf8] to-[#eefaff]" />
          Use vector start points (don't optimize)
        </label>
      </Card>

      <div className="shrink-0 pt-[3px]">
        <div className="flex items-end gap-px h-[23px] pr-1" role="tablist">
          {['Tabs', 'Leads', 'Ramps', 'Order', 'Corners'].map((name) => (
            <button
              key={name}
              role="tab"
              aria-selected={tab === name}
              onClick={() => setTab(name)}
              className={clsx(
                'flex-auto border border-b-0 border-[#8c8e94] px-0.5',
                tab === name ? ['h-[23px] min-w-[51px] bg-white', bold] : 'h-5 text-xs bg-linear-to-b from-[#f2f2f2] from-50% to-[#dcdcdc] to-50%'
              )}
            >
              {name}
            </button>
          ))}
        </div>
        <div className="h-[186px] border border-[#8c8e94] border-b-0 bg-[#fdfdfd] p-0.5 pb-0">
          <div className="h-[183px] border border-[#dcdcdc] border-r-2 border-b-2 border-r-[#888] border-b-[#888] pl-[9px] pr-[5px] text-[#838383]">
            <label className={clsx('flex items-center gap-1.5 h-8 pl-1 text-black', bold)}>
              <input type="checkbox" className={checkBase} />
              Add tabs to toolpath
            </label>
            <div className="flex items-center h-[35px]">
              <svg width="44" height="34" viewBox="0 0 44 34">
                <path d="M3 23L38 24Q40 27 36 31Q20 34 7 31Q3 29 3 23Z" fill="#b5aa8a" />
                <path d="M1 21H37Q36 27 32 29Q18 32 7 29Q3 27 1 21Z" fill="#fbe7a2" />
                <path d="M2 10Q4 6 9 5Q18 1 28 5Q33 5 37 10Q28 12 28 16Q28 20 31 22H8Q11 19 11 16Q11 12 2 10Z" fill="#fbe7a2" />
                <path d="M1 10.500H9Q12 13 11 17Q10 20 8 20.500H1M37 10.500H29Q26 13 27 17Q28 20 30 20.500H37" fill="none" stroke="#8a6a30" />
                <path d="M10.500 0V12M26.500 0V12" stroke="#111" strokeDasharray="3 2" />
              </svg>
              <label htmlFor="len" className="w-[65px]">Length</label>
              <Num id="len" value="5.0" disabled className="w-[41px] rounded-xs border-[#aaa]" />
              <span className="pl-1.5">mm</span>
            </div>
            <div className="flex items-center h-[35px]">
              <svg width="44" height="18" viewBox="0 0 44 18">
                <path d="M3 5H38V16H3Z" fill="#c8bfa6" /><path d="M1 3H36V14H1Z" fill="#fbe49a" />
                <path d="M1 3H36" stroke="#a07f40" /><path d="M10 8H27V14H10Z" fill="#b08648" />
                <path d="M27 8.500H39M27 13.500H39" stroke="#111" strokeDasharray="2 1.500" />
              </svg>
              <label htmlFor="thick" className="w-[65px]">Thickness</label>
              <Num id="thick" value="2.5" disabled className="w-[41px] rounded-xs border-[#aaa]" />
              <span className="pl-1.5">mm</span>
            </div>
            <div className="flex items-center h-[29px]">
              <svg width="44" height="18" viewBox="0 0 44 18">
                <path d="M3 5H38V16H3Z" fill="#c8bfa6" /><path d="M1 3H36V14H1Z" fill="#fbe49a" />
                <path d="M1 3H36" stroke="#a07f40" /><path d="M8 14L18 8L29 14Z" fill="#b08648" />
              </svg>
              <label className="flex items-center gap-[3px]">
                <input type="checkbox" disabled className="appearance-none size-[13px] border border-[#bcbcbc] bg-[#fbfbfb]" />
                Create 3D tabs
              </label>
            </div>
            <div className="flex justify-end pt-5">
              <PushButton disabled className="w-[99px] h-[21px] px-1 text-left">Edit Tabs ...</PushButton>
            </div>
          </div>
        </div>
      </div>

      <Card className="flex-1 mt-1 pl-1.5 pt-1 rounded-b-none border-b-0">
        <dl className="grid grid-cols-[77px_1fr] leading-[17px]">
          <dt>Safe Z</dt><dd>6.0 mm</dd>
          <dt>Home Position</dt><dd>X:0.00 Y:0.00 Z:20.00</dd>
        </dl>
      </Card>
    </div>
  );
};

const ToolpathsPanel = () => (
  <aside className="w-[280px] ml-1 shrink-0 flex flex-col bg-[#d7e4f1] border-r border-[#8ba0bc]">
    <div className="h-[25px] shrink-0 flex items-center gap-1.5 pl-1 pr-1.5 bg-[#e3edf7]">
      <Grip />
      <h2 className="flex-1 text-xs">Toolpaths</h2>
      <button aria-label="Pin toolpaths panel"><PushPin className="rotate-90" /></button>
    </div>
    <div className="flex-1 min-h-0 flex">
      <ProfileForm />
      <div className="w-4 shrink-0 flex flex-col bg-[#ececec]">
        <button aria-label="Scroll up" className="h-[18px] flex items-center justify-center"><svg width="7" height="4"><path d="M0 4H7L3.500 0Z" fill="#333" /></svg></button>
        <div className="flex-1">
          <div className="h-[87%] flex items-center justify-center rounded-xs border border-[#979797] bg-linear-to-r from-[#f4f4f4] from-50% to-[#cfcfd4] to-50%">
            <svg width="7" height="8"><path d="M0 1H7M0 4H7M0 7H7" stroke="#555" /></svg>
          </div>
        </div>
        <button aria-label="Scroll down" className="h-[18px] flex items-center justify-center"><svg width="7" height="4"><path d="M0 0H7L3.500 4Z" fill="#333" /></svg></button>
      </div>
    </div>
  </aside>
);

const taskIcons = [
  { name: 'Start', art: (
    <>
      <defs><radialGradient id="orb" cy="0.900"><stop offset="0" stopColor="#35c5ee" /><stop offset="0.600" stopColor="#1d6296" /><stop offset="1" stopColor="#5e7f98" /></radialGradient></defs>
      <circle cx="19" cy="19" r="18" fill="url(#orb)" stroke="#8fa9ba" />
      <path d="M3 16A16 16 0 0 1 35 16Q19 22 3 16Z" fill="#fff" fillOpacity="0.300" />
      <path d="M11 10Q15 8 19 10L17 18Q13 16 9 18Z" fill="#e8622c" />
      <path d="M20 10.500Q24 13 29 11L27 18.500Q22 20.500 18.500 18Z" fill="#8cc63e" />
      <path d="M9 19Q13 17 17 19L15 27Q11 25 7 27Z" fill="#4ba6e8" />
      <path d="M18 19.500Q22 22 27 20L25 27.500Q20 29.500 16 27Z" fill="#fbc62f" />
    </>
  ) },
  { name: 'Internet Explorer', art: (
    <>
      <path d="M19 6A13 13 0 1 0 31.500 24H24Q19 29 14 24Q12.500 22 12.500 20H32A13 13 0 0 0 19 6ZM13 15.500Q15 11 19 11T25.500 15.500Z" fill="#54bdf0" stroke="#1b7fc4" strokeWidth="0.700" />
      <path d="M32 11C35 4 29 1 19 9C8 17 1 32 6 35C9 36 12 34 15 32" fill="none" stroke="#f3bf1f" strokeWidth="2.500" />
    </>
  ) },
  { name: 'Explorer', active: true, art: (
    <>
      <path d="M3 9L4 6H11L12 9H18L19 7H33L35 11V31H3Z" fill="#e8c96e" />
      <path d="M6 7H9V9H6ZM14 9H17V11H14Z" fill="#3a9c46" /><path d="M23 10H27V12H23Z" fill="#3a78c8" />
      <path d="M3 13H35V31H3Z" fill="#f9e6a0" stroke="#d0ac50" />
      <path d="M8 35V26Q8 22 12 22H27Q31 22 31 26V35H26V28H13V35Z" fill="#a5d8f4" stroke="#4c97c4" />
    </>
  ) },
  { name: 'Chrome', art: (
    <>
      <circle cx="19" cy="19" r="15" fill="#f8c834" />
      <path d="M6 11.500A15 15 0 0 1 32 11.500H19L13 22.500Z" fill="#dd4336" />
      <path d="M6 11.500L12.500 22.500Q16 27 21 26L17 34A15 15 0 0 1 6 11.500Z" fill="#259b55" />
      <circle cx="19" cy="19" r="7" fill="#fff" /><circle cx="19" cy="19" r="5.500" fill="#4285e8" />
    </>
  ) },
  { name: 'PW3D', art: (
    <g fill="#2a2c60" stroke="#34378a" strokeWidth="0.600" fontFamily="Liberation Sans, sans-serif" fontWeight="bold" fontSize="16" textAnchor="middle">
      <text x="19" y="16">PW</text><text x="19" y="34">3D</text>
    </g>
  ) },
  { name: 'VCarve Pro', active: true, light: true, art: (
    <>
      <path d="M5 17L30 10L35 29L11 35Z" fill="#e59f63" stroke="#7b4b22" /><path d="M5 17L30 10L31 13L6 20Z" fill="#f5bf8b" />
      <path d="M14 17L19 29L26 14" fill="none" stroke="#5f3a10" strokeWidth="3" /><path d="M14 17L19 28L26 14" fill="none" stroke="#e1b13a" strokeWidth="1" />
      <path d="M10 3V11H6L11.500 18L17 11H13V3Z" fill="#cfd5da" stroke="#7b8288" />
    </>
  ) },
  { name: 'Snipping Tool', art: (
    <>
      <ellipse cx="15" cy="14" rx="12" ry="9" fill="#f4f4f6" stroke="#c5303a" strokeWidth="1.500" />
      <path d="M12 6L24 26M21 6L18 25" stroke="#aab0b8" strokeWidth="3" />
      <ellipse cx="16" cy="28" rx="3.500" ry="5" fill="none" stroke="#3e9ad0" strokeWidth="2.500" /><ellipse cx="27" cy="27" rx="3.500" ry="5" fill="none" stroke="#3e9ad0" strokeWidth="2.500" transform="rotate(-40 27 27)" />
    </>
  ) },
  { name: 'ShopBot', art: (
    <>
      <rect x="5" y="3" width="28" height="31" rx="3" fill="#c4c6ca" />
      <path d="M8 18L18 13L29 17L20 25Z" fill="#f7ee2c" stroke="#1217b0" strokeWidth="2" />
      <path d="M7 19L20 26V32M20 26L30 18M7 19V28M30 18V27M13 9V14M13 9L20 6L24 9L30 12V17M24 9V14" fill="none" stroke="#1217b0" strokeWidth="2.400" />
      <path d="M24 8L31 11" stroke="#f7ee2c" strokeWidth="1.500" />
      <circle cx="19" cy="15" r="1.500" fill="#d22" />
    </>
  ) },
  { name: 'Media Player', art: (
    <>
      <path d="M12 8H32V31H12Z" fill="#5aa2cc" stroke="#b5def2" /><path d="M9 8H29V32H9Z" fill="#6eb4dc" stroke="#b5def2" /><path d="M6 8H26V33H6Z" fill="#8ac6e8" stroke="#c5e6f6" />
      <circle cx="16" cy="20" r="9" fill="#ee7c1d" stroke="#fbc58f" /><path d="M13 14.500V25.500L22 20Z" fill="#fff" />
    </>
  ) },
  { name: 'Paint', active: true, art: (
    <>
      <path d="M5 27C1 16 10 9 20 10C31 10 35 19 31 27C28 33 19 35 15 31C17 26 12 23 9 29Z" fill="#b6dcf0" stroke="#6fa8ca" />
      <circle cx="9" cy="20" r="2.500" fill="#e0483c" /><circle cx="14" cy="15" r="2.500" fill="#4aa84a" /><circle cx="21" cy="14" r="2.500" fill="#efc43a" /><circle cx="17" cy="22" r="2" fill="#26496a" />
      <path d="M28 8L20 34L23 33L31 10Z" fill="#e09a48" stroke="#9a6023" strokeWidth="0.700" /><path d="M24 3Q30 6 34 4Q33 11 29 10Q26 8 24 3Z" fill="#c09468" />
    </>
  ) },
];

const Taskbar = () => (
  <footer className="h-[41px] shrink-0 flex items-center justify-between border-t border-[#4c5359] bg-linear-to-r from-[#0a1119] via-[#10161c] to-[#080b0f] text-white">
    <div className="flex h-full">
      {taskIcons.map((task, i) => (
        <div key={task.name} className={clsx('h-full flex justify-center', i === 0 ? 'w-[58px] pr-1' : 'w-[62px]')}>
          <button
            aria-label={task.name}
            className={clsx(
              'w-[58px] h-[38px] mt-px flex items-center justify-center rounded-xs',
              task.active && 'border border-[#b4b8bb]',
              task.active && (task.light ? 'bg-linear-to-br from-[#c9cccf] via-[#6c7176] to-[#a9adb1]' : 'bg-linear-to-br from-[#8b8f93] via-[#34393e] to-[#2a2f34]')
            )}
          >
            <svg width="38" height="38" viewBox="0 0 38 38" className="shrink-0">{task.art}</svg>
          </button>
        </div>
      ))}
    </div>
    <div className="flex items-center h-full text-xs">
      <span className="pr-4">ES</span>
      <svg width="64" height="16" viewBox="0 0 64 16">
        <path d="M4 11H11L7.500 7.500Z" fill="#fff" />
        <path d="M25.500 2V15" stroke="#fff" strokeWidth="1.300" /><path d="M27 3H33V5H39L36 8V10H32V8H27Z" fill="#fff" />
        <path d="M50 14V12M53 14V10.500M56 14V8.500M59 14V6M62 14V4" stroke="#fff" strokeWidth="2" />
      </svg>
      <div className="w-[90px] text-center leading-4">
        <div>08:19 p.m.</div>
        <div>21/03/2017</div>
      </div>
      <button aria-label="Show desktop" className="w-3.5 h-full border border-[#555c62] bg-linear-to-b from-[#4a4f54] to-[#15181b]" />
    </div>
  </footer>
);

export default function App() {
  return (
    <div className="relative h-screen flex flex-col overflow-hidden bg-[#f0f0f0] text-black font-[Roboto,'Noto_Sans',sans-serif]">
      <TitleBar />
      <MenuBar />
      <div className="flex-1 min-h-0 flex">
        <DrawingPanel />
        <Workspace />
        <ToolpathsPanel />
        <div className="w-[22px] shrink-0 bg-[#fcfcfc] pl-0.5 pt-0.5">
          <button className="w-5 h-[66px] flex items-center justify-center text-xs leading-4 [writing-mode:vertical-rl] rounded-l border border-[#999] bg-[#f4f4f4]">Toolpaths</button>
        </div>
      </div>
      <div className="h-[19px] shrink-0 flex items-center border-t border-[#8a8a84] bg-[#f0eeec] text-xs">
        <span className="flex-1 basis-0 pl-0.5">Ready</span>
        <span className="w-[178px] border-r border-[#d8d4d0] text-[11px]">X:2483.8054 Y:1284.2752</span>
        <span className="w-[364px]" />
      </div>
      <Taskbar />

      {/* caps lock indicator */}
      <div className="absolute right-6 bottom-[86px] w-[74px] h-[69px] rounded-md bg-black flex items-center justify-center">
        <svg width="42" height="42" viewBox="0 0 42 42">
          <path d="M21 5L36 25H31V29H37V36H5V29H11V25H6Z" fill="none" stroke="#fff" strokeWidth="3" />
          <text x="21" y="32" textAnchor="middle" fill="#fff" stroke="#fff" fontFamily="Roboto, sans-serif" fontWeight="bold" fontSize="21">A</text>
        </svg>
      </div>
    </div>
  );
}
